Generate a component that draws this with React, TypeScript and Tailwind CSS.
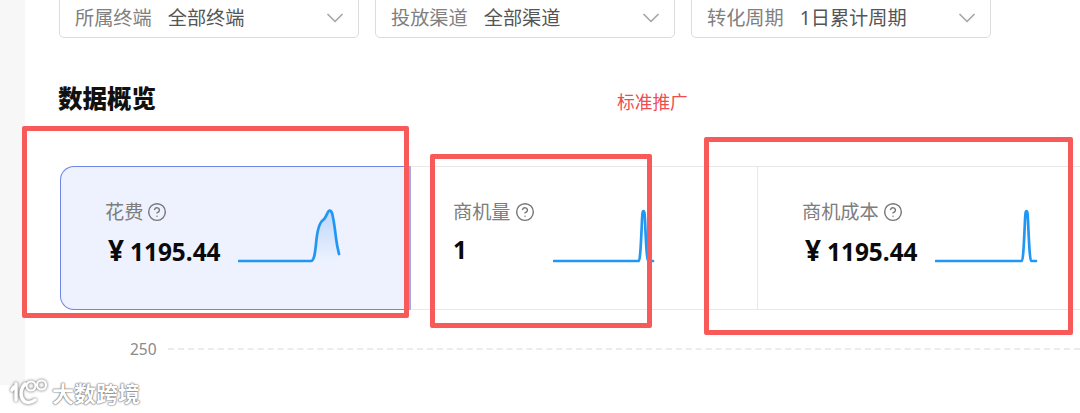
import React from "react";
import { ChevronDown, CircleHelp } from "lucide-react";

const font = "[font-family:'Noto_Sans','Noto_Sans_CJK_SC',sans-serif]";

function Select({ label, value }: { label: string; value: string }) {
  return (
    <div className="flex h-[41px] w-[300px] items-center rounded-b-[5px] border border-[#dcdcdc] pl-[15px] pr-[9px] text-[19.2px] leading-none">
      <span className="text-[#808080]">{label}</span>
      <span className="ml-[16px] text-[#555555]">{value}</span>
      <ChevronDown className="ml-auto h-[28px] w-[28px] text-[#a8a8a8]" strokeWidth={1.5} />
    </div>
  );
}

function Label({ text }: { text: string }) {
  return (
    <div className="flex h-[24px] items-center gap-[4px] text-[19.2px] leading-none text-[#7d7d7d]">
      <span>{text}</span>
      <CircleHelp className="h-[20px] w-[20px] text-[#777777]" strokeWidth={1.7} />
    </div>
  );
}

function Money({ value }: { value: string }) {
  return (
    <div className="ml-[3px] mt-[10px] flex items-baseline text-[24.4px] font-bold leading-[32px] text-[#0a0a0a]">
      <span className="w-[22px] text-[28px] leading-[32px]">¥</span>
      <span>{value}</span>
    </div>
  );
}

function Spark({ d, fill, width }: { d: string; fill?: string; width: number }) {
  return (
    <svg width={width} height={56} viewBox={`0 0 ${width} 56`} fill="none" className="mt-[8px] shrink-0">
      <defs>
        <linearGradient id="sparkFill" x1="0" y1="0" x2="0" y2="1">
          <stop offset="0" stopColor="#bcd6fb" />
          <stop offset="1" stopColor="#edf2fe" />
        </linearGradient>
      </defs>
      {fill && <path d={fill} fill="url(#sparkFill)" />}
      <path d={d} stroke="#2196f3" strokeWidth="2.7" strokeLinecap="round" strokeLinejoin="round" />
    </svg>
  );
}

export default function App() {
  return (
    <div className={`relative flex h-[413px] w-[1080px] overflow-hidden bg-white ${font}`}>
      <aside className="h-[385px] w-[25px] shrink-0 bg-[#f7f7f7]" />

      <main className="min-w-0 flex-1">
        <div className="-mt-[3px] ml-[34px] flex gap-[16px]">
          <Select label="所属终端" value="全部终端" />
          <Select label="投放渠道" value="全部渠道" />
          <Select label="转化周期" value="1日累计周期" />
        </div>

        <div className="ml-[33px] mt-[43px] flex h-[36px] items-center">
          <h2 className="w-[559px] text-[24.5px] font-black leading-none text-[#111111]">数据概览</h2>
          <span className="mt-[8px] text-[17.7px] leading-none text-[#ee4d4f]">标准推广</span>
        </div>

        <div className="ml-[35px] mt-[49px] flex h-[144px] w-[1020px]">
          <div className="flex w-[351px] shrink-0 rounded-l-[14px] border border-r-2 border-[#6f86e4] border-r-[#a3a8e8] bg-[#edf2fe] pl-[44px] pt-[33px]">
            <div className="w-[133px]">
              <Label text="花费" />
              <Money value="1195.44" />
            </div>
            <div>
              <Spark
                width={104}
                d="M1 53H73C76 53 77 46 78 36C79 24 81 15 85 12C87 11 88 8 90 4C91 2 93 2 94 5C96 12 97 22 98 30C99 38 100 42 101 46"
                fill="M1 53H73C76 53 77 46 78 36C79 24 81 15 85 12C87 11 88 8 90 4C91 2 93 2 94 5C96 12 97 22 98 30C99 38 100 42 101 46V53Z"
              />
            </div>
          </div>

          <div className="flex w-[347px] shrink-0 border-y border-r border-[#e8e8e8] pl-[42px] pt-[33px]">
            <div className="w-[100px]">
              <Label text="商机量" />
              <div className="mt-[10px] text-[24.4px] font-bold leading-[32px] text-[#0a0a0a]">1</div>
            </div>
            <div>
              <Spark width={104} d="M1 53H86C87 53 88 36 89 12C89.5 3 90 3 90.5 3C91 3 91.5 3 92 12C93 36 94 53 95 53H100" />
            </div>
          </div>

          <div className="flex flex-1 border-y border-[#e8e8e8] pl-[44px] pt-[33px]">
            <div className="w-[133px]">
              <Label text="商机成本" />
              <Money value="1195.44" />
            </div>
            <div>
              <Spark width={104} d="M1 53H87C88 53 89 36 90 12C90.5 3 91 3 91.5 3C92 3 92.5 3 93 12C94 36 95 53 96 53H101" />
            </div>
          </div>
        </div>

        <div className="ml-[105px] mt-[29px] flex items-center gap-[11px]">
          <span className="text-[15.5px] leading-[20px] text-[#8a8a8a]">250</span>
          <div className="h-0 flex-1 border-t-2 border-dashed border-[#ececec]" />
        </div>
      </main>

      {/* Red annotation boxes drawn over the page */}
      <div className="absolute left-[22px] top-[126px] h-[192px] w-[387px] rounded-[2px] border-[5px] border-[#f85a5a]" />
      <div className="absolute left-[430px] top-[154px] h-[174px] w-[222px] rounded-[2px] border-[5px] border-[#f85a5a]" />
      <div className="absolute left-[704px] top-[137px] h-[198px] w-[369px] rounded-[2px] border-[5px] border-[#f85a5a]" />

      {/* Watermark */}
      <div className="absolute left-[10px] top-[379px] flex items-center gap-[4px]">
        <svg width="38" height="27" viewBox="0 0 38 27" fill="none" stroke="#ffffff" strokeWidth="3.4" strokeLinecap="round" className="drop-shadow-[0_0_1.5px_#555555]">
          <path d="M4 8L2 11M6 5V21" />
          <path d="M15 5C11 9 10 15 12 19C14 24 20 25 25 21" />
          <circle cx="21" cy="7" r="4.5" strokeWidth="2.2" />
          <circle cx="31.5" cy="6" r="4.5" strokeWidth="2.2" />
        </svg>
        <span className="text-[22px] font-bold leading-none text-white [text-shadow:0_0_2px_#555555,0_0_1px_#555555]">大数跨境</span>
      </div>
    </div>
  );
}
